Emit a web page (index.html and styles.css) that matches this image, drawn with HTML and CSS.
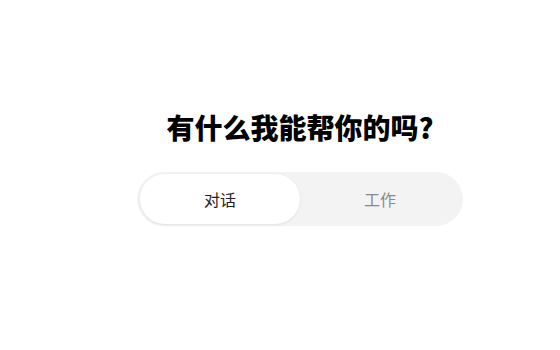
FILE: index.html
```html
<!DOCTYPE html>
<html lang="zh-CN">
<head>
  <meta charset="UTF-8" />
  <meta name="viewport" content="width=device-width, initial-scale=1.0" />
  <title>对话</title>
  <link rel="stylesheet" href="styles.css">
</head>
<body>
  <div class="page">
    <!-- collapsed side rail -->
    <aside class="side-rail"></aside>

    <main class="main">
      <h1 class="welcome">有什么我能帮你的吗?</h1>

      <div class="mode-switch">
        <button class="mode-tab active">对话</button>
        <button class="mode-tab">工作</button>
      </div>
    </main>
  </div>
</body>
</html>
```

FILE: styles.css
```css
/* Basic Reset */
* {
  margin: 0;
  padding: 0;
  box-sizing: border-box;
}

body {
  font-family: "Noto Sans CJK SC", "Noto Sans", sans-serif;
  background-color: #fff;
  color: #111;
}

.page {
  display: flex;
  width: 560px;
  height: 350px;
}

.side-rail {
  width: 40px;
  flex-shrink: 0;
}

/* Main area */
.main {
  flex: 1;
  display: flex;
  flex-direction: column;
  align-items: center;
  padding-top: 109px;
}

.welcome {
  font-size: 28px;
  line-height: 36px;
  font-weight: 900;
  color: #000;
}

/* Mode switch */
.mode-switch {
  margin-top: 27px;
  display: flex;
  width: 326px;
  height: 54px;
  padding: 2px 3px;
  background-color: #f3f3f3;
  border-radius: 27px;
}

.mode-tab {
  flex: 1;
  border: none;
  background: transparent;
  border-radius: 25px;
  font-family: inherit;
  font-size: 16px;
  color: #8a8a8a;
  cursor: pointer;
}

.mode-tab.active {
  background-color: #fff;
  color: #222;
  box-shadow: 0 1px 3px rgba(0, 0, 0, 0.08);
}
```
